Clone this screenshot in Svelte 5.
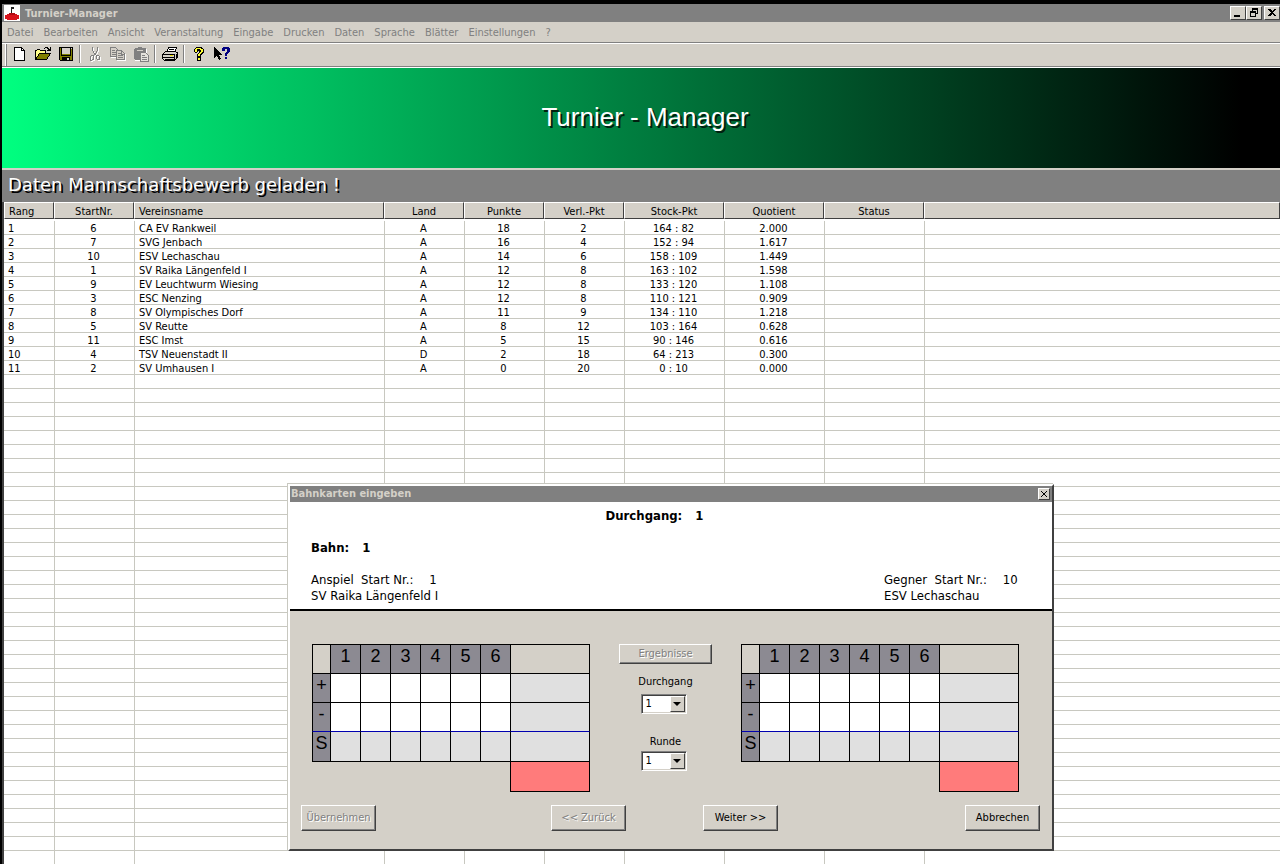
<script>
  const menu = ['Datei', 'Bearbeiten', 'Ansicht', 'Veranstaltung', 'Eingabe', 'Drucken', 'Daten', 'Sprache', 'Blätter', 'Einstellungen', '?'];

  const columns = ['Rang', 'StartNr.', 'Vereinsname', 'Land', 'Punkte', 'Verl.-Pkt', 'Stock-Pkt', 'Quotient', 'Status', ''];

  const teams = [
    [1, 6, 'CA EV Rankweil', 'A', 18, 2, '164 : 82', '2.000'],
    [2, 7, 'SVG Jenbach', 'A', 16, 4, '152 : 94', '1.617'],
    [3, 10, 'ESV Lechaschau', 'A', 14, 6, '158 : 109', '1.449'],
    [4, 1, 'SV Raika Längenfeld I', 'A', 12, 8, '163 : 102', '1.598'],
    [5, 9, 'EV Leuchtwurm Wiesing', 'A', 12, 8, '133 : 120', '1.108'],
    [6, 3, 'ESC Nenzing', 'A', 12, 8, '110 : 121', '0.909'],
    [7, 8, 'SV Olympisches Dorf', 'A', 11, 9, '134 : 110', '1.218'],
    [8, 5, 'SV Reutte', 'A', 8, 12, '103 : 164', '0.628'],
    [9, 11, 'ESC Imst', 'A', 5, 15, '90 : 146', '0.616'],
    [10, 4, 'TSV Neuenstadt II', 'D', 2, 18, '64 : 213', '0.300'],
    [11, 2, 'SV Umhausen I', 'A', 0, 20, '0 : 10', '0.000']
  ];

  const emptyRows = Array(90);
  const ends = [1, 2, 3, 4, 5, 6];

  let durchgang = $state(1);
  let runde = $state(1);
</script>

{#snippet scoreCard(side)}
  <table class="card">
    <colgroup>
      <col class="c-sign" />
      {#each ends as n}<col class="c-end" />{/each}
      <col class="c-sum" />
    </colgroup>
    <tbody>
      <tr>
        <td></td>
        {#each ends as n}<th scope="col">{n}</th>{/each}
        <td></td>
      </tr>
      {#each ['+', '-'] as sign}
        <tr>
          <th scope="row">{sign}</th>
          {#each ends as n}
            <td class="entry"><input type="text" aria-label={`${side} ${sign} ${n}`} /></td>
          {/each}
          <td class="sum"></td>
        </tr>
      {/each}
      <tr class="total">
        <th scope="row">S</th>
        {#each ends as n}<td class="sum"></td>{/each}
        <td class="sum"></td>
      </tr>
      <tr class="result">
        <td class="blank" colspan="7"></td>
        <td class="red"></td>
      </tr>
    </tbody>
  </table>
{/snippet}

<div class="window">
  <header class="titlebar">
    <svg class="logo" viewBox="0 0 16 16" aria-hidden="true">
      <rect width="16" height="16" fill="#fff" />
      <path d="M7 2h3v2H8v5H7z" fill="#222" />
      <path d="M3 9h10v1h2v4h-2v1H3v-1H1v-4h2z" fill="#d8141c" />
      <path d="M5 8h6v2H5z" fill="#b00c14" />
    </svg>
    <span class="caption">Turnier-Manager</span>
    <button class="sys" aria-label="Minimieren">
      <svg viewBox="0 0 12 10"><path d="M2 7h6v2H2z" /></svg>
    </button>
    <button class="sys" aria-label="Wiederherstellen">
      <svg viewBox="0 0 12 10"><path d="M4 0h6v6H8V5h1V2H5v1H4zM2 3h6v6H2zM3 5v3h4V5z" fill-rule="evenodd" /></svg>
    </button>
    <button class="sys last" aria-label="Schließen">
      <svg viewBox="0 0 12 10"><path d="M2 1h2l2 2 2-2h2L7 4.500 10 8H8L6 6 4 8H2l3-3.500z" /></svg>
    </button>
  </header>

  <nav class="menu">
    {#each menu as item}<button>{item}</button>{/each}
  </nav>

  <div class="toolbar">
    <button aria-label="Neu">
      <svg viewBox="0 0 16 16">
        <path d="M2.500 1.500h7l3 3v10h-10z" fill="#fff" stroke="#000" />
        <path d="M9.500 1.500v3h3" fill="none" stroke="#000" />
      </svg>
    </button>
    <button aria-label="Öffnen">
      <svg viewBox="0 0 16 16">
        <path d="M.5 13.500v-9h1l1-1h2l1 1h5v3" fill="#ff8" stroke="#000" />
        <path d="M.5 13.500l4-6h11l-4 6z" fill="#808000" stroke="#000" />
        <path d="M9 3V2h1V1h3v1h1v1h1V1h1v4h-4V4h1V3h-1V2h-2v1z" />
      </svg>
    </button>
    <button aria-label="Speichern">
      <svg viewBox="0 0 16 16">
        <path d="M1.500 1.500h13v13h-12l-1-1z" fill="#808000" stroke="#000" />
        <path d="M4 2h8v6H4z" fill="#d4d0c8" />
        <path d="M3 2h1v7h8V2h1v8H3zM4 11h8v4H4z" />
        <path d="M9 12h2v2H9zM13 2h1v1h-1z" fill="#d4d0c8" />
      </svg>
    </button>
    <i class="sep"></i>
    <button aria-label="Ausschneiden" disabled>
      <svg viewBox="0 0 16 16">
        <g fill="none" stroke="#fff" transform="translate(1 1)">
          <path d="M5.500 1v3l1 2 2 3M10.500 1v3l-1 2-2 3" />
          <path d="M4.500 9.500h2v4h-1l-1 1h-1v-4zM9.500 9.500h2l1 1v3h-2l-1-1z" />
        </g>
        <g fill="none" stroke="#808080">
          <path d="M5.500 1v3l1 2 2 3M10.500 1v3l-1 2-2 3" />
          <path d="M4.500 9.500h2v4h-1l-1 1h-1v-4zM9.500 9.500h2l1 1v3h-2l-1-1z" />
        </g>
      </svg>
    </button>
    <button aria-label="Kopieren" disabled>
      <svg viewBox="0 0 16 16">
        <path d="M1.500 2.500h5l3 3v6h-8zM7.500 5.500h5l3 3v6h-8z" fill="#fff" stroke="#fff" />
        <path d="M.5 1.500h5l3 3v6h-8z" fill="#d4d0c8" stroke="#808080" />
        <path d="M2 4h3v1H2zM2 6h4v1H2zM2 8h4v1H2z" fill="#808080" />
        <path d="M6.500 4.500h5l3 3v6h-8z" fill="#d4d0c8" stroke="#808080" />
        <path d="M8 7h3v1H8zM8 9h5v1H8zM8 11h5v1H8zM11 5h1v3h2v1h-3z" fill="#808080" />
      </svg>
    </button>
    <button aria-label="Einfügen" disabled>
      <svg viewBox="0 0 16 16">
        <path d="M2 3h12v12H2z" fill="#fff" />
        <path d="M1 3l1-1h3V1h4v1h3l1 1v10l-1 1H2l-1-1z" fill="#808080" />
        <path d="M4 4h6v1H4z" fill="#d4d0c8" />
        <path d="M7.500 6.500h5l3 3v6h-8z" fill="#e4e2dc" stroke="#808080" />
        <path d="M9 9h3v1H9zM9 11h5v1H9zM9 13h5v1H9z" fill="#808080" />
      </svg>
    </button>
    <i class="sep"></i>
    <button aria-label="Drucken">
      <svg viewBox="0 0 16 16">
        <path d="M4.500 6.500l2-5h8l-2 5z" fill="#fff" stroke="#000" />
        <path d="M.5 8.500l3-3h9l3 1v5l-3 3h-10l-2-2z" fill="#d4d0c8" stroke="#000" />
        <path d="M7 3h5v1H7zM6 5h5v1H6zM1 8h12v1H1zM1 11h12v1H1zM12 8h1v6h-1zM14 8h1v4h-1zM3 13h9v1H3z" />
        <path d="M8 9h3v1H8z" fill="#e8d800" />
      </svg>
    </button>
    <i class="sep"></i>
    <button aria-label="Hilfe">
      <svg viewBox="0 0 16 16">
        <path d="M4 2h1V1h6v1h1v1h1v4h-1v1h-1v1h-1v2H6V8h1V7h1V5H7v1H6v1H4V6H3V3h1zM6 11h4v4H6z" />
        <path d="M5 2h5v1h2v3h-1v1h-1v1H9v2H7V8h1V7h1V6h1V4H9V3H6v3H4V3h1zM7 12h2v2H7z" fill="#ff3" />
      </svg>
    </button>
    <button aria-label="Direkthilfe">
      <svg viewBox="0 0 16 16">
        <path d="M0 1l8 8H5l2 4-2 1-2-4-3 2z" />
        <path d="M8 2h1V1h6v1h1v4h-1v1h-1v1h-1v2h-2V7h1V6h1V3h-2v2H8zM11 11h2v2h-2z" fill="#000080" />
      </svg>
    </button>
  </div>

  <div class="banner"><h1>Turnier - Manager</h1></div>
  <p class="status">Daten Mannschaftsbewerb geladen !</p>

  <main class="list">
    <table class="ranking">
      <colgroup>
        <col class="w50" /><col class="w80" /><col class="w250" />
        <col class="w80" /><col class="w80" /><col class="w80" />
        <col class="w100" /><col class="w100" /><col class="w100" />
        <col />
      </colgroup>
      <thead>
        <tr>
          {#each columns as c}<th scope="col"><div>{c}</div></th>{/each}
        </tr>
      </thead>
      <tbody>
        {#each teams as team}
          <tr>
            {#each columns as c, i}<td>{team[i] ?? ''}</td>{/each}
          </tr>
        {/each}
        {#each emptyRows as row}
          <tr>
            {#each columns as c}<td></td>{/each}
          </tr>
        {/each}
      </tbody>
    </table>
  </main>

  <div class="dialog" role="dialog" aria-label="Bahnkarten eingeben">
    <div class="dlg-title">
      <span>Bahnkarten eingeben</span>
      <button aria-label="Schließen">
        <svg viewBox="0 0 8 8"><path d="M1 1l6 6M7 1l-6 6" stroke="#000" /></svg>
      </button>
    </div>

    <div class="info">
      <p class="round"><b>Durchgang:</b><b>1</b></p>
      <p class="lane"><b>Bahn:</b><b>1</b></p>
      <div class="sides">
        <div>
          <p class="start"><span>Anspiel&nbsp; Start Nr.:</span><span>1</span></p>
          <p>SV Raika Längenfeld I</p>
        </div>
        <div class="opponent">
          <p class="start"><span>Gegner&nbsp; Start Nr.:</span><span>10</span></p>
          <p>ESV Lechaschau</p>
        </div>
      </div>
    </div>

    <div class="entry-area">
      {@render scoreCard('Anspiel')}
      <div class="middle">
        <button class="btn wide" disabled>Ergebnisse</button>
        <label for="durchgang">Durchgang</label>
        <div class="combo">
          <select id="durchgang" bind:value={durchgang}>
            {#each [1, 2] as n}<option value={n}>{n}</option>{/each}
          </select>
          <span class="drop"></span>
        </div>
        <label class="second" for="runde">Runde</label>
        <div class="combo">
          <select id="runde" bind:value={runde}>
            {#each ends as n}<option value={n}>{n}</option>{/each}
          </select>
          <span class="drop"></span>
        </div>
      </div>
      {@render scoreCard('Gegner')}
    </div>

    <div class="actions">
      <button class="btn" disabled>Übernehmen</button>
      <div class="steps">
        <button class="btn" disabled>&lt;&lt; Zurück</button>
        <button class="btn">Weiter &gt;&gt;</button>
      </div>
      <button class="btn">Abbrechen</button>
    </div>
  </div>
</div>

<style>
  :global(body) { background: #000; }

  .window {
    position: relative;
    display: flex;
    flex-direction: column;
    box-sizing: border-box;
    height: 100vh;
    padding: 4px 0 0 2px;
    overflow: hidden;
    background: #000;
    color: #000;
    font: 11px/14px "DejaVu Sans Condensed", "DejaVu Sans", sans-serif;
  }
  p, h1 { margin: 0; }
  button { font: inherit; color: inherit; padding: 0; border: 0; background: none; }
  svg { display: block; shape-rendering: crispEdges; }

  .titlebar { display: flex; align-items: center; flex: none; height: 18px; padding-left: 2px; background: #808080; color: #d4d0c8; }
  .logo { width: 16px; height: 16px; }
  .caption { flex: 1; padding: 2px 0 0 5px; font-weight: bold; }
  .sys {
    width: 16px;
    height: 14px;
    box-sizing: border-box;
    padding: 1px;
    background: #d4d0c8;
    border: 1px solid;
    border-color: #fff #404040 #404040 #fff;
  }
  .sys svg { width: 12px; height: 10px; }
  .last { margin-left: 2px; }

  .menu { display: flex; align-items: center; gap: 10px; flex: none; height: 18px; padding: 2px 0 0 5px; background: #d4d0c8; color: #808080; border-bottom: 1px solid #808080; }

  .toolbar { display: flex; align-items: flex-start; flex: none; height: 22px; padding-left: 6px; background: #d4d0c8; border-top: 1px solid #fff; border-bottom: 1px solid #808080; box-shadow: 0 1px #fff, inset 3px 0 #d4d0c8, inset 4px 0 #fff, inset 5px 0 #808080; margin-bottom: 1px; }
  .toolbar button { display: grid; place-items: center; width: 23px; height: 20px; }
  .toolbar svg { width: 16px; height: 16px; }
  .sep { width: 1px; height: 18px; margin: 1px 2px; background: #808080; border-right: 1px solid #fff; }

  .banner { display: grid; place-items: center; flex: none; height: 100px; padding: 0 0 2px 8px; box-sizing: border-box; background: linear-gradient(to right, #00ff80, #000 97%); }
  .banner h1 { font: 26px/30px "Liberation Sans", Arial, sans-serif; color: #fff; text-shadow: 2px 2px #002010; }

  .status { flex: none; height: 32px; padding-left: 6px; background: #808080; border-top: 2px solid #d4d0c8; color: #fff; font: 18px/30px "DejaVu Sans", sans-serif; text-shadow: 2px 2px #000; }

  .list { flex: 1; min-height: 0; overflow: hidden; background: #fff; border-left: 2px solid #404040; }
  .ranking { width: 100%; table-layout: fixed; border-spacing: 0; }
  .w50 { width: 50px; }
  .w80 { width: 80px; }
  .w100 { width: 100px; }
  .w250 { width: 250px; }
  .ranking th { padding: 0; height: 19px; vertical-align: top; font-weight: normal; }
  .ranking th div { height: 15px; line-height: 17px; background: #d4d0c8; border: 1px solid; border-color: #fff #404040 #404040 #fff; }
  .ranking td { height: 11px; padding: 2px 2px 0 0; line-height: 11px; text-align: center; border-bottom: 1px solid #c8c8c0; border-left: 1px solid #c8c8c0; white-space: nowrap; }
  .ranking td:first-child { border-left: 0; }
  .ranking th:first-child, .ranking td:first-child,
  .ranking th:nth-child(3), .ranking td:nth-child(3) { text-align: left; }
  .ranking th:first-child div, .ranking td:first-child { padding-left: 4px; }
  .ranking th:nth-child(3) div, .ranking td:nth-child(3) { padding-left: 4px; }

  .dialog {
    position: absolute;
    left: 288px;
    top: 484px;
    width: 762px;
    background: #d4d0c8;
    border: 2px solid;
    border-color: #fff #404040 #404040 #fff;
    box-shadow: -1px -1px #c8c8c0;
  }
  .dlg-title { display: flex; align-items: center; justify-content: space-between; height: 16px; padding: 0 2px 0 1px; background: #808080; color: #d4d0c8; font-weight: bold; }
  .dlg-title button { display: grid; place-items: center; width: 12px; height: 12px; box-sizing: border-box; background: #d4d0c8; border: 1px solid; border-color: #fff #404040 #404040 #fff; }
  .dlg-title svg { width: 8px; height: 8px; shape-rendering: auto; }

  .info { padding: 6px 34px 5px 21px; background: #fff; border-bottom: 2px solid #000; font-size: 13px; line-height: 16px; }
  .info p { display: flex; gap: 13px; }
  .info .round { justify-content: center; padding-right: 20px; }
  .info .lane { margin: 16px 0; }
  .info .start { gap: 16px; }
  .sides { display: flex; justify-content: space-between; }
  .opponent { width: 134px; white-space: nowrap; }

  .entry-area { display: flex; align-items: flex-start; padding: 33px 33px 0 22px; }
  .card { flex: none; width: 278px; table-layout: fixed; border-spacing: 0; font: 18px/22px "Liberation Sans", Arial, sans-serif; }
  .c-sign { width: 18px; }
  .c-end { width: 30px; }
  .c-sum { width: 80px; }
  .card td, .card th { height: 28px; padding: 0; border: 0 solid #000; border-width: 1px 0 0 1px; vertical-align: top; font-weight: normal; text-align: center; }
  .card td:last-child { border-right-width: 1px; }
  .card th { background: #8c8a92; }
  .card .entry { background: #fff; }
  .card .sum { background: #e0e0e0; }
  .card .total td, .card .total th { height: 29px; border-top-color: #0000b0; }
  .card .result td { height: 29px; }
  .card .result .blank { border-left-width: 0; }
  .card .result .red { background: #ff7b7b; border-bottom-width: 1px; }
  .card input { display: block; width: 100%; height: 28px; box-sizing: border-box; padding: 0; border: 0; background: none; text-align: center; font: inherit; }

  .middle { flex: 1; display: flex; flex-direction: column; align-items: center; }
  .middle label { margin: 11px 0 5px; }
  .middle .second { margin-top: 21px; margin-bottom: 2px; }
  .combo { position: relative; width: 46px; height: 20px; margin-right: 4px; }
  select {
    display: block;
    width: 100%;
    height: 100%;
    box-sizing: border-box;
    padding: 0 0 0 4px;
    appearance: none;
    background: #fff;
    color: #000;
    font: inherit;
    border: 1px solid;
    border-color: #808080 #fff #fff #808080;
    border-radius: 0;
    box-shadow: inset 1px 1px #404040, inset -1px -1px #d4d0c8;
  }
  .drop { position: absolute; top: 2px; right: 2px; display: grid; place-items: center; width: 15px; height: 16px; box-sizing: border-box; background: #d4d0c8; border: 1px solid; border-color: #fff #404040 #404040 #fff; pointer-events: none; }
  .drop::after { content: ""; border: 4px solid transparent; border-top-color: #000; border-bottom: 0; }

  .btn {
    width: 75px;
    height: 26px;
    box-sizing: border-box;
    white-space: nowrap;
    background: #d4d0c8;
    border: 1px solid;
    border-color: #fff #404040 #404040 #fff;
    box-shadow: inset -1px -1px #808080;
  }
  .btn:disabled { color: #808080; text-shadow: 1px 1px #fff; }
  .wide { width: 93px; height: 20px; }
  .actions { display: flex; padding: 13px 12px 18px 11px; }
  .steps { flex: 1; display: flex; justify-content: center; gap: 77px; padding-right: 12px; }
</style>
